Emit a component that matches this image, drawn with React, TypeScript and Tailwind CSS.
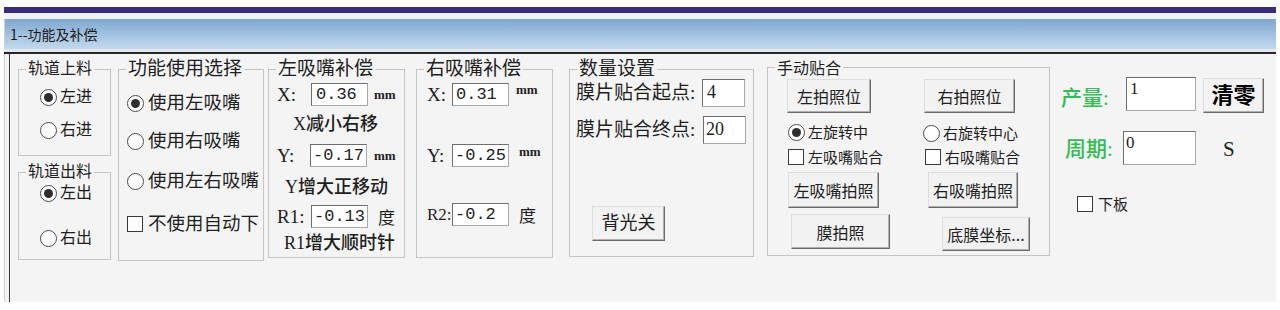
import React from "react";

const SERIF = "font-['Liberation_Serif','Noto_Sans_CJK_SC',serif]";
const SANS = "font-['Noto_Sans_CJK_SC','Liberation_Sans',sans-serif]";
const MONO = "font-['Liberation_Mono','Noto_Sans_CJK_SC',monospace]";

function Box({
  className,
  title,
  titleClass,
  children,
}: {
  className: string;
  title: string;
  titleClass: string;
  children?: React.ReactNode;
}) {
  return (
    <div className={`relative shrink-0 border border-[#c4c4c4] ${className}`}>
      <span
        className={`absolute left-[7px] px-[2px] bg-[#f4f4f4] whitespace-nowrap ${titleClass}`}
      >
        {title}
      </span>
      {children}
    </div>
  );
}

function Radio({ checked }: { checked?: boolean }) {
  return (
    <span className="w-[17px] h-[17px] rounded-full border-[1.5px] border-[#4a4a4a] bg-white flex items-center justify-center shrink-0">
      {checked && <span className="w-[9px] h-[9px] rounded-full bg-[#2e2e2e]" />}
    </span>
  );
}

function Check() {
  return <span className="w-[16px] h-[16px] border-[1.5px] border-[#3a3a3a] bg-white shrink-0" />;
}

function Btn({ className, children }: { className: string; children: React.ReactNode }) {
  return (
    <button
      type="button"
      className={`flex items-center justify-center shrink-0 whitespace-nowrap bg-[#f2f2f2] border border-t-[#dedede] border-l-[#dedede] border-r-[#6a6a6a] border-b-[#6a6a6a] shadow-[inset_-1px_-1px_0_#b0b0b0] ${className}`}
    >
      {children}
    </button>
  );
}

function Field({ className, children }: { className: string; children: React.ReactNode }) {
  return (
    <div
      className={`flex shrink-0 bg-white border border-t-[#6e6e6e] border-l-[#6e6e6e] border-r-[#a8a8a8] border-b-[#a8a8a8] text-[#222] ${className}`}
    >
      {children}
    </div>
  );
}

export default function App() {
  return (
    <div className={`w-[1280px] h-[310px] bg-white overflow-hidden text-[#1e1e1e] ${SERIF}`}>
      <div className="ml-[4px] w-[1272px] pt-[7px]">
        <div className="h-[6px] bg-[#3a2b79]" />
        <div className="h-[6px] bg-[#eef1f5]" />
        <div
          className={`h-[30px] border-l border-[#c8d0d8] bg-gradient-to-b from-[#80a7d0] to-[#c2d9ee] flex items-center pl-[5px] text-[14px] text-[#1a1a1a] ${SANS}`}
        >
          1--功能及补偿
        </div>
        <div className="h-[3px] bg-[#e2e6ea]" />
        <div className="h-[2px] bg-[#262626]" />
        <div className="h-[248px] bg-[#f4f4f4] flex">
          <div className="w-[5px] border-l border-[#cfcfcf]" />
          <div className="flex-1 border-l border-[#3a3a3a] flex items-start">
            {/* Column 1 */}
            <div className="ml-[8px] flex flex-col shrink-0">
              <Box
                className="mt-[15px] w-[93px] h-[87px]"
                title="轨道上料"
                titleClass="top-[-11px] text-[16px] leading-[20px]"
              >
                <div className="flex flex-col pl-[21px] pt-[17px] text-[16px] leading-[20px]">
                  <div className="flex items-center h-[20px]">
                    <Radio checked />
                    <span className="ml-[3px]">左进</span>
                  </div>
                  <div className="flex items-center h-[20px] mt-[13px]">
                    <Radio />
                    <span className="ml-[3px]">右进</span>
                  </div>
                </div>
              </Box>
              <Box
                className="mt-[16px] w-[93px] h-[88px]"
                title="轨道出料"
                titleClass="top-[-11px] text-[16px] leading-[20px]"
              >
                <div className="flex flex-col pl-[21px] pt-[10px] text-[16px] leading-[20px]">
                  <div className="flex items-center h-[20px]">
                    <Radio checked />
                    <span className="ml-[3px]">左出</span>
                  </div>
                  <div className="flex items-center h-[20px] mt-[25px]">
                    <Radio />
                    <span className="ml-[3px]">右出</span>
                  </div>
                </div>
              </Box>
            </div>

            {/* 功能使用选择 */}
            <Box
              className="ml-[7px] mt-[15px] w-[146px] h-[192px]"
              title="功能使用选择"
              titleClass="top-[-12px] text-[19px] leading-[22px]"
            >
              <div className="h-full overflow-hidden pt-[22px] pl-[8px] flex flex-col text-[18.5px] leading-[22px] whitespace-nowrap">
                <div className="flex items-center h-[22px]">
                  <Radio checked />
                  <span className="ml-[4px]">使用左吸嘴</span>
                </div>
                <div className="flex items-center h-[22px] mt-[16px]">
                  <Radio />
                  <span className="ml-[4px]">使用右吸嘴</span>
                </div>
                <div className="flex items-center h-[22px] mt-[18px]">
                  <Radio />
                  <span className="ml-[4px]">使用左右吸嘴</span>
                </div>
                <div className="flex items-center h-[22px] mt-[21px]">
                  <Check />
                  <span className="ml-[5px]">不使用自动下</span>
                </div>
              </div>
            </Box>

            {/* 左吸嘴补偿 */}
            <Box
              className="ml-[4px] mt-[15px] w-[137px] h-[189px]"
              title="左吸嘴补偿"
              titleClass="top-[-12px] text-[19px] leading-[22px]"
            >
              <div className="pt-[13px] pl-[8px] flex flex-col text-[19px] whitespace-nowrap">
                <div className="flex items-center h-[23px]">
                  <span className="w-[34px] leading-[20px]">X:</span>
                  <Field className={`w-[57px] h-[23px] items-center pl-[4px] text-[17px] ${MONO}`}>0.36</Field>
                  <span className="ml-[6px] text-[13px] font-bold leading-[16px]">mm</span>
                </div>
                <div className="mt-[8px] ml-[16px] leading-[20px] text-[18px] font-medium">X减小右移</div>
                <div className="mt-[10px] flex items-center h-[23px]">
                  <span className="w-[33px] leading-[20px]">Y:</span>
                  <Field className={`w-[57px] h-[23px] items-center pl-[2px] text-[17px] ${MONO}`}>-0.17</Field>
                  <span className="ml-[7px] text-[13px] font-bold leading-[16px]">mm</span>
                </div>
                <div className="mt-[10px] ml-[8px] leading-[20px] text-[18px] font-medium">Y增大正移动</div>
                <div className="mt-[8px] flex items-center h-[23px]">
                  <span className="w-[34px] leading-[20px]">R1:</span>
                  <Field className={`w-[57px] h-[23px] items-center pl-[2px] text-[17px] ${MONO}`}>-0.13</Field>
                  <span className={`ml-[10px] text-[17px] leading-[20px] ${SANS}`}>度</span>
                </div>
                <div className="mt-[5px] ml-[7px] leading-[20px] text-[18px] font-medium">R1增大顺时针</div>
              </div>
            </Box>

            {/* 右吸嘴补偿 */}
            <Box
              className="ml-[11px] mt-[15px] w-[137px] h-[189px]"
              title="右吸嘴补偿"
              titleClass="top-[-12px] text-[19px] leading-[22px]"
            >
              <div className="pt-[13px] pl-[10px] flex flex-col text-[19px] whitespace-nowrap">
                <div className="flex items-start h-[23px]">
                  <span className="w-[25px] leading-[23px]">X:</span>
                  <Field className={`w-[57px] h-[23px] items-center pl-[3px] text-[17px] ${MONO}`}>0.31</Field>
                  <span className="ml-[7px] text-[13px] font-bold leading-[14px]">mm</span>
                </div>
                <div className="mt-[38px] flex items-start h-[23px]">
                  <span className="w-[25px] leading-[23px]">Y:</span>
                  <Field className={`w-[57px] h-[23px] items-center pl-[2px] text-[17px] ${MONO}`}>-0.25</Field>
                  <span className="ml-[10px] text-[13px] font-bold leading-[16px]">mm</span>
                </div>
                <div className="mt-[36px] flex items-center h-[23px]">
                  <span className="w-[25px] text-[17px] leading-[20px]">R2:</span>
                  <Field className={`w-[57px] h-[23px] items-center pl-[2px] text-[17px] ${MONO}`}>-0.2</Field>
                  <span className={`ml-[10px] text-[17px] leading-[20px] ${SANS}`}>度</span>
                </div>
              </div>
            </Box>

            {/* 数量设置 */}
            <Box
              className="ml-[16px] mt-[15px] w-[185px] h-[188px]"
              title="数量设置"
              titleClass="top-[-12px] text-[19px] leading-[22px]"
            >
              <div className="pt-[9px] pl-[6px] flex flex-col whitespace-nowrap">
                <div className="flex items-center">
                  <span className="w-[126px] text-[19px] leading-[22px]">膜片贴合起点:</span>
                  <Field className="w-[43px] h-[28px] items-start pl-[4px] pt-[1px] text-[18px] leading-[22px]">4</Field>
                </div>
                <div className="mt-[9px] flex items-center">
                  <span className="w-[127px] text-[19px] leading-[22px]">膜片贴合终点:</span>
                  <Field className="w-[43px] h-[28px] items-start pl-[2px] pt-[1px] text-[18px] leading-[22px]">20</Field>
                </div>
                <Btn className="mt-[62px] ml-[16px] w-[73px] h-[35px] text-[18px]">背光关</Btn>
              </div>
            </Box>

            {/* 手动贴合 */}
            <Box
              className={`ml-[13px] mt-[13px] w-[283px] h-[189px] ${SANS}`}
              title="手动贴合"
              titleClass="top-[-11px] text-[16px] leading-[20px]"
            >
              <div className="pt-[11px] pl-[19px] flex whitespace-nowrap text-[#1e1e1e]">
                <div className="w-[136px] flex flex-col items-start">
                  <Btn className="w-[84px] h-[34px] text-[16px]">左拍照位</Btn>
                  <div className="mt-[10px] ml-[1px] h-[18px] flex items-center text-[15px]">
                    <Radio checked />
                    <span className="ml-[3px]">左旋转中</span>
                  </div>
                  <div className="mt-[7px] ml-[1px] h-[18px] flex items-center text-[15px]">
                    <Check />
                    <span className="ml-[4px]">左吸嘴贴合</span>
                  </div>
                  <Btn className="mt-[6px] ml-[1px] w-[91px] h-[36px] text-[16px]">左吸嘴拍照</Btn>
                  <Btn className="mt-[6px] ml-[4px] w-[99px] h-[35px] text-[16px]">膜拍照</Btn>
                </div>
                <div className="flex flex-col items-start">
                  <Btn className="ml-[1px] w-[91px] h-[34px] text-[16px]">右拍照位</Btn>
                  <div className="mt-[11px] h-[18px] flex items-center text-[15px]">
                    <Radio />
                    <span className="ml-[3px]">右旋转中心</span>
                  </div>
                  <div className="mt-[6px] ml-[2px] h-[18px] flex items-center text-[15px]">
                    <Check />
                    <span className="ml-[4px]">右吸嘴贴合</span>
                  </div>
                  <Btn className="mt-[6px] ml-[5px] w-[90px] h-[36px] text-[16px]">右吸嘴拍照</Btn>
                  <Btn className="mt-[9px] ml-[19px] w-[88px] h-[34px] text-[16px]">底膜坐标...</Btn>
                </div>
              </div>
            </Box>

            {/* Right panel */}
            <div className="ml-[11px] mt-[23px] flex flex-col shrink-0 whitespace-nowrap">
              <div className="flex items-start">
                <span className="w-[65px] mt-[7px] text-[21px] leading-[28px] font-medium text-[#33bb55]">产量:</span>
                <Field className="w-[70px] h-[34px] items-start pl-[3px] pt-[1px] text-[17px] leading-[20px]">1</Field>
                <Btn className="ml-[7px] mt-[1px] w-[61px] h-[35px] text-[22px] font-bold text-black">清零</Btn>
              </div>
              <div className="mt-[18px] pl-[4px] flex items-start">
                <span className="w-[58px] mt-[4px] text-[21px] leading-[28px] font-medium text-[#33bb55]">周期:</span>
                <Field className="w-[73px] h-[34px] items-start pl-[2px] pt-[1px] text-[17px] leading-[20px]">0</Field>
                <span className="ml-[27px] mt-[4px] text-[21px] leading-[28px]">S</span>
              </div>
              <div className={`mt-[30px] pl-[16px] flex items-center h-[18px] ${SANS}`}>
                <Check />
                <span className="ml-[5px] text-[15px]">下板</span>
              </div>
            </div>
          </div>
        </div>
      </div>
    </div>
  );
}
